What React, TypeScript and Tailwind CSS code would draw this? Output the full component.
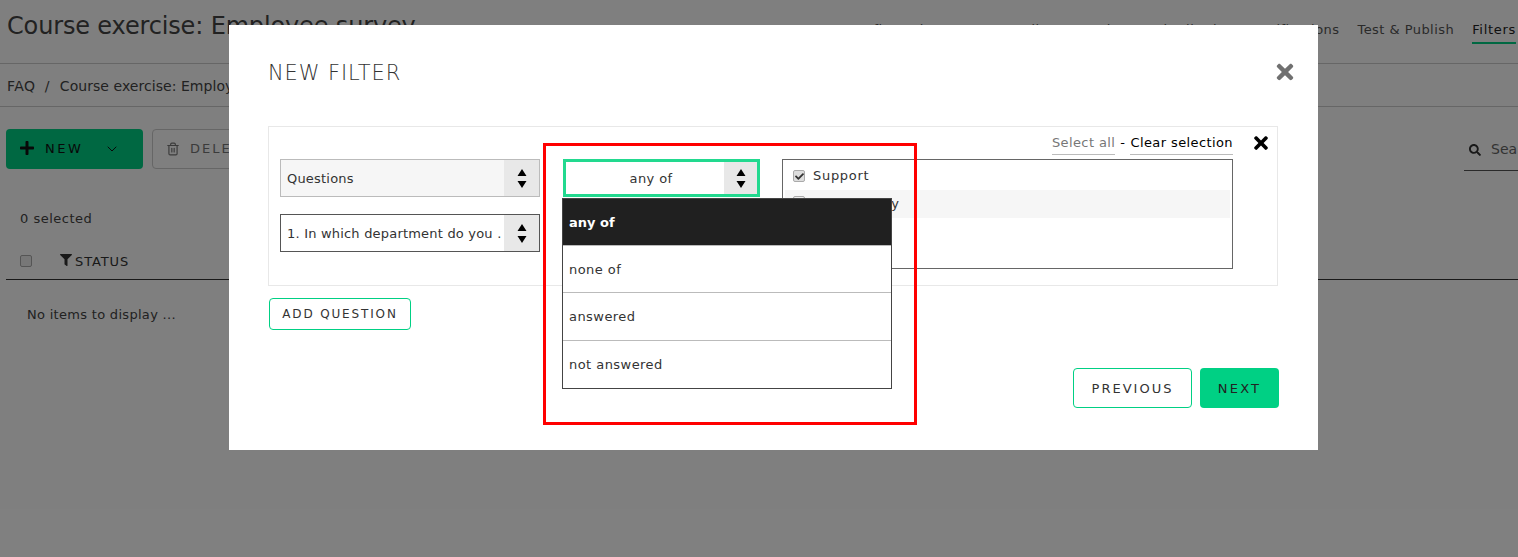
import React from 'react';
import { FaFilter, FaPlus, FaSearch, FaTimes, FaCheck } from 'react-icons/fa';
import { ChevronDown, Trash2 } from 'lucide-react';

const font = "font-['DejaVu_Sans','Liberation_Sans',sans-serif]";

const Spinner: React.FC = () => (
  <svg width="10" height="19" viewBox="0 0 10 19" className="text-black">
    <path d="M5 0 L9.5 7 L0.5 7 Z M0.5 12 L9.5 12 L5 19 Z" fill="currentColor" />
  </svg>
);

const Select: React.FC<{ label: string; className?: string; textClass?: string; boxClass?: string }> = ({ label, className, textClass, boxClass }) => (
  <div className={`flex h-[38px] items-center justify-between ${className}`}>
    <span className={`overflow-hidden whitespace-nowrap pl-[6px] pt-[2px] text-[13px] tracking-[0.2px] text-[#333] ${textClass}`}>{label}</span>
    <div className={`flex h-full shrink-0 items-center justify-center bg-[#e8e8e8] ${boxClass}`}>
      <Spinner />
    </div>
  </div>
);

const tabs = ['Configuration', 'Text & Media', 'Questions', 'Distribution', 'Notifications', 'Test & Publish'];
const options = [
  { label: 'none of', cls: 'h-[47px] border-b border-[#bbb] pt-[1px]' },
  { label: 'answered', cls: 'h-[48px] border-b border-[#bbb]' },
  { label: 'not answered', cls: 'h-[47px]' },
];

const App: React.FC = () => {
  return (
    <div className={`relative h-[557px] w-[1518px] overflow-hidden bg-white ${font}`}>
      {/* page behind the dialog */}
      <div className="flex h-[64px] justify-between border-b border-[#ccc] pl-[7px] pr-[2px]">
        <h1 className="pt-[10px] text-[24px] leading-[32px] tracking-[-0.15px] text-[#444]">Course exercise: Employee survey</h1>
        <div className="flex gap-[18px] pt-[21px] text-[13px] leading-[18px] tracking-[0.45px] text-[#555]">
          {tabs.map((t) => (
            <span key={t}>{t}</span>
          ))}
          <span className="h-[23px] border-b-[2px] border-[#00d084] font-medium tracking-[0.7px] text-[#222]">Filters</span>
        </div>
      </div>
      <div className="flex h-[43px] items-center gap-[9px] border-b border-[#ccc] pl-[7px] pt-[2px] text-[14px] tracking-[0.5px] text-[#444]">
        <span>FAQ</span>
        <span>/</span>
        <span className="ml-[1px] tracking-[0.05px]">Course exercise: Employee survey</span>
      </div>
      <div className="flex items-start justify-between pl-[6px] pt-[22px]">
        <div className="flex gap-[9px]">
          <div className="flex h-[40px] w-[137px] items-center rounded-[4px] bg-[#00d084] pl-[13px] text-[#111]">
            <FaPlus size={16} className="mt-[-2px]" />
            <span className="ml-[10px] text-[13px] tracking-[2.5px]">NEW</span>
            <ChevronDown size={16} strokeWidth={1.5} className="ml-[21px]" />
          </div>
          <div className="flex h-[40px] w-[200px] items-center rounded-[4px] border border-[#ccc] pl-[13px] text-[#777]">
            <Trash2 size={14} />
            <span className="ml-[10px] text-[13px] tracking-[2px]">DELETE</span>
          </div>
        </div>
        <div className="flex h-[42px] w-[54px] items-center gap-[9px] overflow-hidden border-b border-[#555] pl-[5px] text-[14px] text-[#666]">
          <FaSearch size={12} className="shrink-0 text-[#333]" />
          <span className="ml-[1px]">Sea</span>
        </div>
      </div>
      <div className="pl-[20px] pt-[39px] text-[13px] leading-[18px] tracking-[0.5px] text-[#444]">0 selected</div>
      <div className="ml-[6px] mt-[24px] flex h-[28px] items-start border-b border-[#333] pl-[14px] text-[13px] text-[#333]">
        <div className="mt-[3px] h-[12px] w-[12px] rounded-[2px] border border-[#aaa] bg-[#eee]" />
        <FaFilter size={12} className="ml-[28px] mt-[2px]" />
        <span className="ml-[3px] font-medium tracking-[0.9px]">STATUS</span>
      </div>
      <div className="pl-[27px] pt-[26px] text-[13px] leading-[18px] tracking-[0.3px] text-[#444]">No items to display ...</div>

      {/* overlay and dialog */}
      <div className="absolute inset-0 bg-black/50" />
      <div className="absolute left-[229px] top-[25px] h-[425px] w-[1089px] bg-white px-[39px] pt-[34px]">
        <div className="flex h-[26px] items-center justify-between">
          <h2 className="pt-[1px] text-[21px] font-light leading-[26px] tracking-[0.9px] text-[#333]">NEW FILTER</h2>
          <FaTimes size={24} className="mr-[-18px] text-[#707070]" />
        </div>
        <div className="mt-[41px] h-[160px] w-[1010px] border border-[#e8e8e8] pl-[11px]">
          <div className="flex h-[32px] items-center justify-end text-[13px] tracking-[0.4px] text-[#666]">
            <span className="mt-[2px] border-b border-[#bbb] pb-[2px] text-[#777]">Select all</span>
            <span className="mx-[5px] pb-[1px] text-black">-</span>
            <span className="mt-[2px] border-b border-[#bbb] pb-[2px] text-black">Clear selection</span>
            <FaTimes size={20} className="ml-[18px] mr-[6px] text-black" />
          </div>
          <div className="flex">
            <div className="flex w-[260px] flex-col gap-[17px]">
              <Select label="Questions" className="border border-[#bbb] bg-[#f6f6f6]" boxClass="w-[35px]" />
              <Select
                label="1. In which department do you ."
                className="border border-[#555] bg-white"
                textClass="tracking-[-0.05px]"
                boxClass="w-[35px]"
              />
            </div>
            <div className="ml-[23px] w-[197px]">
              <Select
                label="any of"
                className="border-[3px] border-[#22d98f] bg-white"
                textClass="flex-1 pl-[12px] text-center tracking-[0.4px]"
                boxClass="w-[33px]"
              />
            </div>
            <div className="ml-[22px] h-[110px] w-[451px] border border-[#666] px-[2px] pt-[2px] text-[13px] tracking-[0.7px] text-[#333]">
              <div className="flex h-[28px] items-center pl-[8px]">
                <div className="flex h-[12px] w-[12px] items-center justify-center rounded-[2px] border border-[#aaa] bg-[#ddd]">
                  <FaCheck size={9} className="text-[#333]" />
                </div>
                <span className="ml-[8px]">Support</span>
              </div>
              <div className="flex h-[28px] items-center bg-[#f6f6f6] pl-[8px]">
                <div className="mt-[-4px] h-[12px] w-[12px] rounded-[2px] border border-[#aaa] bg-[#eee]" />
                <span className="ml-[8px] tracking-[0.25px]">Accountancy</span>
              </div>
            </div>
          </div>
        </div>
        <div className="ml-[1px] mt-[12px] flex h-[32px] w-[142px] items-center justify-center rounded-[4px] border border-[#00d084] text-[12px] tracking-[1.85px] text-[#333]">
          ADD QUESTION
        </div>
        <div className="mt-[38px] flex justify-end gap-[8px]">
          <div className="flex h-[40px] w-[119px] items-center justify-center rounded-[4px] border border-[#00d084] pt-[1px] text-[13px] tracking-[2px] text-[#333]">
            PREVIOUS
          </div>
          <div className="flex h-[40px] w-[79px] items-center justify-center rounded-[4px] bg-[#00d084] pt-[1px] text-[13px] tracking-[2.2px] text-[#222]">
            NEXT
          </div>
        </div>

        {/* open dropdown */}
        <div className="absolute left-[333px] top-[173px] w-[330px] border border-[#444] bg-white text-[13px] tracking-[0.45px] text-[#333]">
          <div className="flex h-[47px] items-center border-b border-[#bbb] bg-[#202020] pl-[6px] pt-[1px] font-bold tracking-[0px] text-white">any of</div>
          {options.map((o) => (
            <div key={o.label} className={`flex items-center pl-[6px] ${o.cls}`}>
              {o.label}
            </div>
          ))}
        </div>
      </div>

      {/* red annotation */}
      <div className="absolute left-[543px] top-[143px] h-[282px] w-[374px] border-[3px] border-[#ff0000]" />
    </div>
  );
};

export default App;
